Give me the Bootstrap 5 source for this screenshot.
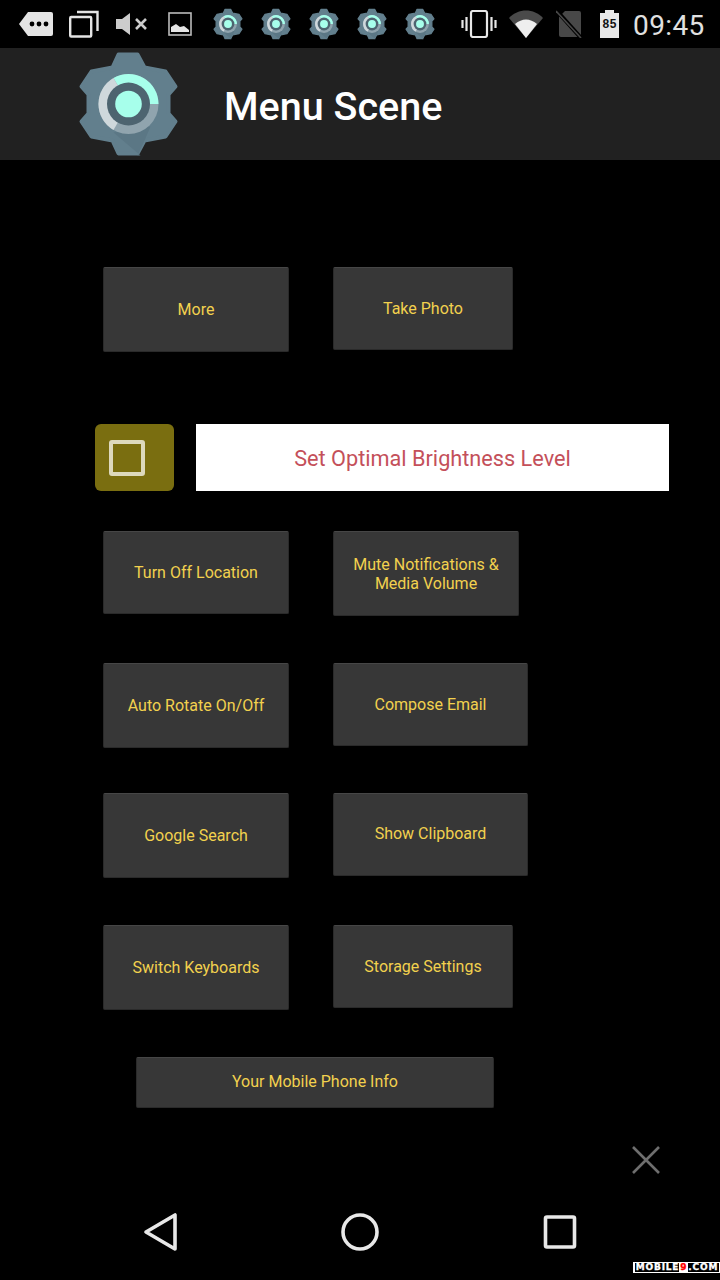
<!DOCTYPE html>
<html lang="en">
<head>
  <meta charset="UTF-8">
  <title>Menu Scene</title>
  <meta name="viewport" content="width=device-width, initial-scale=1">
  <link href="https://cdn.jsdelivr.net/npm/bootstrap@5.3.0/dist/css/bootstrap.min.css" rel="stylesheet">
  <style>
    body {
      background-color: #000;
      font-family: Roboto, "Liberation Sans", sans-serif;
      width: 720px;
      height: 1280px;
      overflow: hidden;
      position: relative;
    }
    .status-bar {
      height: 48px;
      padding-left: 19px;
      color: #e4e4e4;
    }
    .status-bar svg { display: block; flex: none; }
    .status-time { font-size: 28px; line-height: 48px; margin: 3px 0 0 14px; color: #e0e0e0; letter-spacing: .4px; }
    .title-bar {
      height: 112px;
      background-color: #212121;
      padding-left: 78px;
    }
    .title-text { font-size: 39.5px; font-weight: 500; color: #fff; margin: 0 0 0 45px; padding-top: 5px; line-height: 107px; }
    .menu-area { padding-left: 103px; padding-top: 107px; }
    .menu-row { display: flex; gap: 44px; align-items: flex-start; }
    .menu-btn {
      width: 186px;
      height: 85px;
      padding: 0 12px;
      background-color: #373737;
      border: 1px solid #2a2a2a;
      border-top-color: #464646;
      border-radius: 2px;
      color: #f2d14e;
      font-size: 16px;
      line-height: 19px;
      box-shadow: none;
    }
    .menu-btn:hover, .menu-btn:active { background-color: #373737 !important; color: #f2d14e !important; }
    .menu-btn.lift-text { padding-bottom: 2px; }
    .h-83 { height: 83px; }
    .w-180 { width: 180px; }
    .w-195 { width: 195px; }
    .bright-row { margin: 72px 0 40px -8px; height: 67px; }
    .check-tile {
      width: 79px;
      height: 67px;
      padding-left: 14px;
      background-color: #7a6e10;
      border-radius: 6px;
    }
    .check-box { width: 36px; height: 36px; border: 4px solid #ddd9bd; border-radius: 3px; }
    .bright-btn {
      width: 473px;
      height: 67px;
      margin-left: 22px;
      padding-top: 10px;
      background-color: #fff;
      color: #c4505a;
      font-size: 21.7px;
    }
    .gap-a { margin-top: 47px; }
    .gap-b { margin-top: 45px; }
    .info-btn { width: 358px; height: 51px; margin: 47px 0 0 33px; }
    .close-x { position: absolute; left: 632px; top: 1146px; }
    .nav-bar { position: absolute; left: 0; right: 0; bottom: 0; height: 96px; }
    .nav-bar svg { position: absolute; top: 28px; }
    .nav-bar .nav-square { top: 30px; }
    .watermark {
      position: absolute;
      right: 0;
      top: 1262px;
      width: 87px;
      height: 11px;
      background-color: #fff;
      padding: 1px 1px 1px 2px;
    }
    .watermark span {
      display: block;
      height: 9px;
      overflow: hidden;
      background-color: #000;
      color: #fff;
      font-family: "DejaVu Sans", sans-serif;
      font-size: 9px;
      font-weight: 700;
      line-height: 9px;
      text-align: center;
      letter-spacing: .8px;
      white-space: nowrap;
      -webkit-text-stroke: .3px #fff;
    }
    .watermark b { color: #f00; background-color: #fff; padding: 0 1px; -webkit-text-stroke: .4px #f00; }
  </style>
</head>
<body>

<!-- Status bar -->
<div class="status-bar d-flex align-items-center">
  <svg width="34" height="26" viewBox="0 0 34 26"><path d="M9 1h23a2 2 0 0 1 2 2v20a2 2 0 0 1-2 2H9L0 13z" fill="#e4e4e4"/><circle cx="13" cy="13" r="2.4" fill="#000"/><circle cx="20" cy="13" r="2.4" fill="#000"/><circle cx="27" cy="13" r="2.4" fill="#000"/></svg>
  <svg style="margin-left:16px" width="30" height="28" viewBox="0 0 30 28" fill="none" stroke="#e4e4e4" stroke-width="2.4"><rect x="1.2" y="7" width="21" height="19.5" rx="1"/><path d="M8 2h20.5v19"/></svg>
  <svg style="margin-left:17px" width="31" height="22" viewBox="0 0 31 22"><path d="M0 6h6l8-6v22l-8-6H0z" fill="#ccc"/><path d="M20 6l10 10M30 6L20 16" stroke="#ccc" stroke-width="2.6"/></svg>
  <svg style="margin-left:21px" width="24" height="24" viewBox="0 0 24 24"><rect x="1" y="1" width="22" height="22" fill="none" stroke="#bbb" stroke-width="1.6"/><path d="M3 20v-5l5-3 4 3 4-1 5 4v2z" fill="#e4e4e4"/></svg>
  <svg style="margin-left:21px" width="30" height="32" viewBox="77.5 50.5 101 106"><use href="#gear"/></svg>
  <svg style="margin-left:18px" width="30" height="32" viewBox="77.5 50.5 101 106"><use href="#gear"/></svg>
  <svg style="margin-left:18px" width="30" height="32" viewBox="77.5 50.5 101 106"><use href="#gear"/></svg>
  <svg style="margin-left:18px" width="30" height="32" viewBox="77.5 50.5 101 106"><use href="#gear"/></svg>
  <svg style="margin-left:18px" width="30" height="32" viewBox="77.5 50.5 101 106"><use href="#gear"/></svg>
  <svg style="margin-left:26px" width="36" height="28" viewBox="0 0 36 28" fill="none" stroke="#e8e8e8"><rect x="10" y="1" width="16" height="26" rx="2" stroke-width="2.2"/><path d="M5.5 7v14M1.5 10v8M30.5 7v14M34.5 10v8" stroke-width="2.2"/></svg>
  <svg style="margin-left:12px" width="34" height="28" viewBox="0 0 34 28"><path d="M0 8C9-2 25-2 34 8L17 28z" fill="#4a4a4a"/><path d="M6 14c7-6 15-6 22 0L17 28z" fill="#eee"/></svg>
  <svg style="margin-left:13px" width="26" height="28" viewBox="0 0 26 28"><path d="M9 1h14a2 2 0 0 1 2 2v22a2 2 0 0 1-2 2H5a2 2 0 0 1-2-2V7z" fill="#484848"/><path d="M1 1l24 27" stroke="#000" stroke-width="4"/><path d="M0 1l25 27" stroke="#484848" stroke-width="1.6"/></svg>
  <div class="position-relative" style="width:19px;height:28px;flex:none;margin-left:18px">
    <svg width="19" height="28" viewBox="0 0 19 28"><path d="M5 0h9v3h5v25H0V3h5z" fill="#e8e8e8"/></svg>
    <span class="position-absolute start-0 end-0 text-center" style="top:9px;font:700 12px/12px 'Liberation Mono',monospace;color:#111">85</span>
  </div>
  <span class="status-time">09:45</span>
</div>

<!-- Title bar -->
<div class="title-bar d-flex align-items-center">
  <svg width="101" height="106" viewBox="77.5 50.5 101 106" style="flex:none"><use href="#gear"/></svg>
  <h1 class="title-text">Menu Scene</h1>
</div>

<!-- Buttons -->
<div class="menu-area">
  <div class="menu-row">
    <button class="btn menu-btn" type="button">More</button>
    <button class="btn menu-btn w-180 h-83" type="button">Take Photo</button>
  </div>

  <div class="bright-row d-flex">
    <div class="check-tile d-flex align-items-center"><div class="check-box"></div></div>
    <button class="btn rounded-0 border-0 bright-btn" type="button">Set Optimal Brightness Level</button>
  </div>

  <div class="menu-row">
    <button class="btn menu-btn h-83" type="button">Turn Off Location</button>
    <button class="btn menu-btn" type="button">Mute Notifications &amp; Media Volume</button>
  </div>
  <div class="menu-row gap-a">
    <button class="btn menu-btn" type="button">Auto Rotate On/Off</button>
    <button class="btn menu-btn w-195 h-83" type="button">Compose Email</button>
  </div>
  <div class="menu-row gap-b">
    <button class="btn menu-btn" type="button">Google Search</button>
    <button class="btn menu-btn w-195 h-83 lift-text" type="button">Show Clipboard</button>
  </div>
  <div class="menu-row gap-a">
    <button class="btn menu-btn" type="button">Switch Keyboards</button>
    <button class="btn menu-btn w-180 h-83" type="button">Storage Settings</button>
  </div>
  <button class="btn menu-btn info-btn d-block lift-text" type="button">Your Mobile Phone Info</button>
</div>

<!-- Close -->
<svg class="close-x" width="28" height="28" viewBox="0 0 28 28"><path d="M1 1l26 26M27 1L1 27" stroke="#6e6e6e" stroke-width="2.6"/></svg>

<!-- Navigation -->
<div class="nav-bar">
  <svg style="left:143px" width="36" height="40" viewBox="0 0 36 40"><path d="M32 3v34L3 20z" fill="none" stroke="#e8e8e8" stroke-width="3.6" stroke-linejoin="round"/></svg>
  <svg style="left:340px" width="40" height="40" viewBox="0 0 40 40"><circle cx="20" cy="20" r="17" fill="none" stroke="#e8e8e8" stroke-width="3.6"/></svg>
  <svg class="nav-square" style="left:543px" width="34" height="36" viewBox="0 0 34 36"><rect x="2.5" y="3" width="29" height="30" rx="1.5" fill="none" stroke="#e8e8e8" stroke-width="3.6"/></svg>
</div>

<div class="watermark"><span>MOBILE<b>9</b>.COM</span></div>

<!-- Gear used by the title bar and the status bar -->
<svg width="0" height="0" class="position-absolute">
  <defs>
    <g id="gear">
      <path d="M118 54H137L144 67 165 71 175 86 168 94V113L175 121 165 136 144 140 137 153H118L112 140 91 136 81 121 88 113V94L81 86 91 71 112 67z" fill="#627f8d" stroke="#627f8d" stroke-width="4" stroke-linejoin="round"/>
      <path d="M113 132L140 155H137L144 140 150 126z" fill="#5b7785"/>
      <circle cx="128" cy="103.5" r="30" fill="#90a4ae"/>
      <path d="M113 77.5A30 30 0 0 1 158 103.5H128z" fill="#a7ffeb"/>
      <path d="M113 77.5A30 30 0 0 0 113 129.5L128 103.5z" fill="#cfd8dc"/>
      <circle cx="128" cy="103.5" r="21.5" fill="#4d6470"/>
      <circle cx="128" cy="103.5" r="13.3" fill="#a7ffeb"/>
    </g>
  </defs>
</svg>

</body>
</html>
